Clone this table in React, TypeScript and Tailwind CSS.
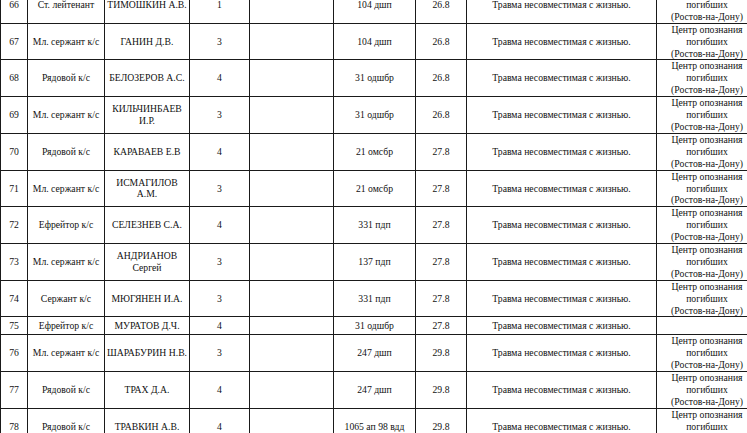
const rows: [string, string, string[], string, string, string, boolean][] = [
  ["66", "Ст. лейтенант", ["ТИМОШКИН А.В."], "1", "104 дшп", "26.8", true],
  ["67", "Мл. сержант к/с", ["ГАНИН Д.В."], "3", "104 дшп", "26.8", true],
  ["68", "Рядовой к/с", ["БЕЛОЗЕРОВ А.С."], "4", "31 одшбр", "26.8", true],
  ["69", "Мл. сержант к/с", ["КИЛЬЧИНБАЕВ", "И.Р."], "3", "31 одшбр", "26.8", true],
  ["70", "Рядовой к/с", ["КАРАВАЕВ Е.В"], "4", "21 омсбр", "27.8", true],
  ["71", "Мл. сержант к/с", ["ИСМАГИЛОВ", "А.М."], "3", "21 омсбр", "27.8", true],
  ["72", "Ефрейтор к/с", ["СЕЛЕЗНЕВ С.А."], "4", "331 пдп", "27.8", true],
  ["73", "Мл. сержант к/с", ["АНДРИАНОВ", "Сергей"], "3", "137 пдп", "27.8", true],
  ["74", "Сержант к/с", ["МЮГЯНЕН И.А."], "3", "331 пдп", "27.8", true],
  ["75", "Ефрейтор к/с", ["МУРАТОВ Д.Ч."], "4", "31 одшбр", "27.8", false],
  ["76", "Мл. сержант к/с", ["ШАРАБУРИН Н.В."], "3", "247 дшп", "29.8", true],
  ["77", "Рядовой к/с", ["ТРАХ Д.А."], "4", "247 дшп", "29.8", true],
  ["78", "Рядовой к/с", ["ТРАВКИН А.В."], "4", "1065 ап 98 вдд", "29.8", true],
];

const td = "border border-[#1a1a1a] px-0 py-0 text-center align-middle whitespace-nowrap";

export default function App() {
  return (
    <div className="w-[747px] h-[433px] overflow-hidden bg-white">
      <table className="w-[757px] table-fixed border-collapse mt-[-14px] font-['Liberation_Serif','Times_New_Roman',serif] text-[9.7px] leading-[11.9px] text-[#111]">
        <colgroup>
          <col className="w-[27px]" />
          <col className="w-[77px]" />
          <col className="w-[85px]" />
          <col className="w-[60px]" />
          <col className="w-[84px]" />
          <col className="w-[82px]" />
          <col className="w-[51px]" />
          <col className="w-[190px]" />
          <col className="w-[101px]" />
        </colgroup>
        <tbody>
          {rows.map(([n, rank, name, cat, unit, date, place]) => (
            <tr key={n} className="h-[18px]">
              <td className={td}>{n}</td>
              <td className={td}>{rank}</td>
              <td className={td}>
                {name.map((l, i) => (
                  <div key={i}>{l}</div>
                ))}
              </td>
              <td className={td}>{cat}</td>
              <td className={td}></td>
              <td className={td}>{unit}</td>
              <td className={td}>{date}</td>
              <td className={td}>Травма несовместимая с жизнью.</td>
              <td className={td}>
                {place && (
                  <>
                    <div>Центр опознания</div>
                    <div>погибших</div>
                    <div>(Ростов-на-Дону)</div>
                  </>
                )}
              </td>
            </tr>
          ))}
        </tbody>
      </table>
    </div>
  );
}
